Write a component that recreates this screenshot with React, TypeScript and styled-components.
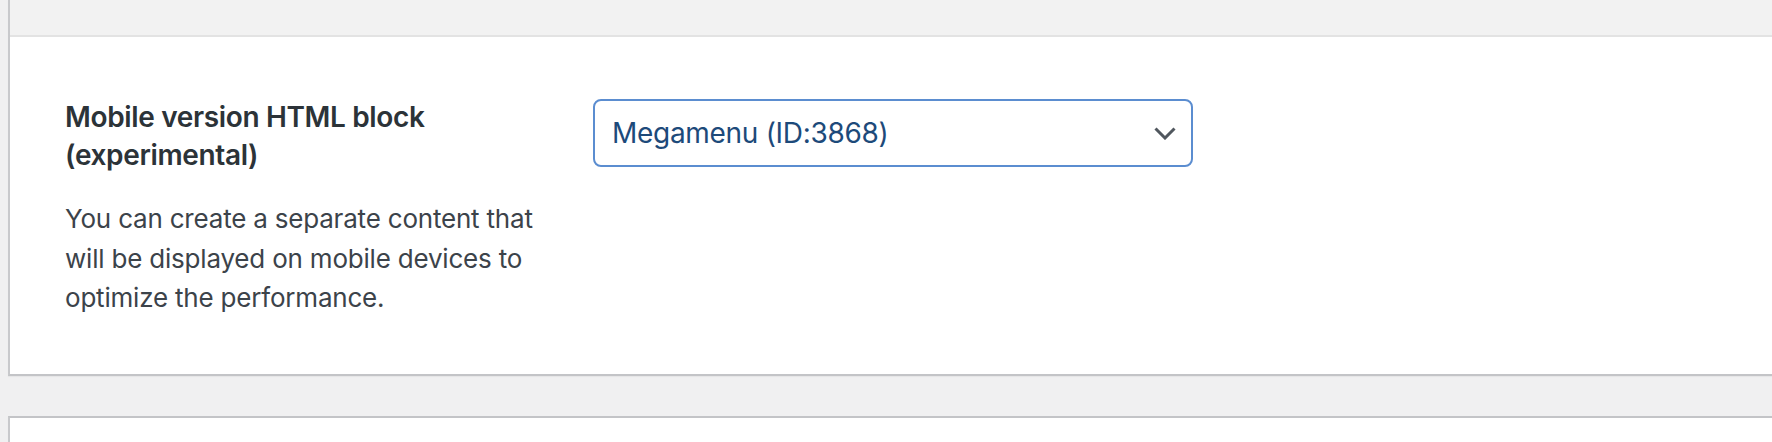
import React from "react";
import styled, { createGlobalStyle } from "styled-components";

const GlobalStyle = createGlobalStyle`
  html, body {
    margin: 0;
    padding: 0;
    background: #f0f0f1;
    font-family: Inter, "Noto Sans", "Liberation Sans", sans-serif;
    -webkit-font-smoothing: antialiased;
  }
`;

const Page = styled.div`
  padding-left: 8px;
  display: flex;
  flex-direction: column;
  gap: 40px;
`;

const Card = styled.section<{ $open?: boolean }>`
  background: #fff;
  border-left: 2px solid #c8c9cc;
  border-top: ${(p) => (p.$open ? "none" : "2px solid #c3c4c7")};
  border-bottom: 2px solid #c3c4c7;
  box-shadow: 0 1px 1px rgba(0, 0, 0, 0.04);
`;

const CardTop = styled.div`
  height: 35px;
  background: #f2f2f2;
  border-bottom: 2px solid #e3e3e3;
`;

const Row = styled.div`
  display: flex;
  align-items: flex-start;
  gap: 38px;
  padding: 62px 0 56px 55px;
`;

const LabelCol = styled.div`
  width: 490px;
  flex-shrink: 0;
`;

const Label = styled.h3`
  margin: 0;
  font-size: 28px;
  line-height: 37.5px;
  font-weight: 600;
  color: #2c3338;
  letter-spacing: -0.35px;
`;

const Description = styled.p`
  margin: 25px 0 0;
  font-size: 26px;
  line-height: 39.5px;
  font-weight: 400;
  color: #3c434a;
  letter-spacing: -0.2px;
`;

const SelectBox = styled.div`
  box-sizing: border-box;
  width: 600px;
  height: 68px;
  border: 2px solid #5b8dd0;
  border-radius: 8px;
  display: flex;
  align-items: center;
  justify-content: space-between;
  padding: 0 15px 0 17px;
  font-size: 28px;
  color: #1d4a7a;
  letter-spacing: -0.3px;
  background: #fff;
`;

const Chevron = styled.svg`
  width: 22px;
  height: 13px;
  flex-shrink: 0;
`;

const Spacer = styled.div`
  height: 40px;
`;

export default function App() {
  return (
    <>
      <GlobalStyle />
      <Page>
        <Card $open>
          <CardTop />
          <Row>
            <LabelCol>
              <Label>Mobile version HTML block (experimental)</Label>
              <Description>
                You can create a separate content that will be displayed on
                mobile devices to optimize the performance.
              </Description>
            </LabelCol>
            <SelectBox>
              <span>Megamenu (ID:3868)</span>
              <Chevron viewBox="0 0 22 13">
                <path
                  d="M1.5 1.5 L11 11 L20.5 1.5"
                  fill="none"
                  stroke="#50575e"
                  strokeWidth="3"
                />
              </Chevron>
            </SelectBox>
          </Row>
        </Card>
        <Card>
          <Spacer />
        </Card>
      </Page>
    </>
  );
}
